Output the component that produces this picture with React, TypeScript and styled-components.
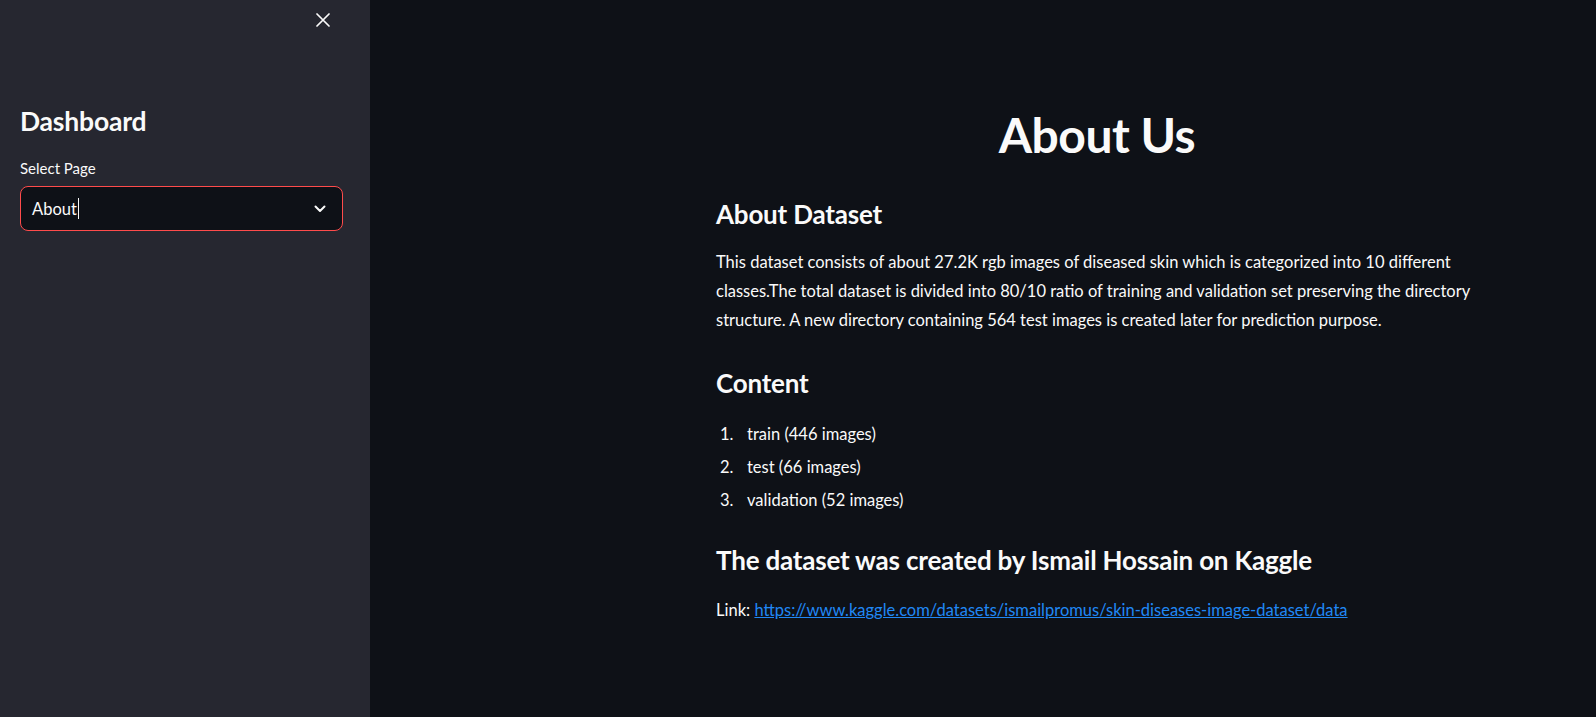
import React from "react";
import styled, { createGlobalStyle } from "styled-components";

const Global = createGlobalStyle`
  html, body { margin: 0; padding: 0; background: #0e1117; }
  body { font-family: Lato, "Liberation Sans", sans-serif; color: #fafafa; }
  * { box-sizing: border-box; }
`;

const Shell = styled.div`
  display: flex;
  width: 100%;
  height: 717px;
  overflow: hidden;
`;

const Sidebar = styled.aside`
  width: 370px;
  flex: none;
  background: #262730;
  display: flex;
  flex-direction: column;
  padding: 0 27px 0 20px;
`;

const SideTop = styled.div`
  height: 40px;
  display: flex;
  justify-content: flex-end;
  align-items: center;
`;

const CloseBtn = styled.button`
  width: 24px;
  height: 24px;
  border: none;
  background: transparent;
  padding: 0;
  display: flex;
  align-items: center;
  justify-content: center;
  color: #fafafa;
  margin-right: 8px;
`;

const SideTitle = styled.h2`
  margin: 62px 0 0 0;
  font-size: 26.5px;
  font-weight: 700;
  line-height: 38px;
  letter-spacing: -0.2px;
`;

const Label = styled.label`
  margin-top: 18px;
  font-size: 15px;
  line-height: 20px;
  display: block;
`;

const SelectBox = styled.div`
  margin-top: 8px;
  height: 45px;
  border: 1px solid #ff4b4b;
  border-radius: 8px;
  background: #0e1117;
  display: flex;
  align-items: center;
  padding: 0 16px 0 11px;
`;

const SelectValue = styled.span`
  flex: 1;
  font-size: 16.5px;
  display: flex;
  align-items: center;
`;

const Caret = styled.span`
  display: inline-block;
  width: 1px;
  height: 21px;
  background: #fafafa;
  margin-left: 1px;
`;

const Main = styled.main`
  flex: 1;
  padding: 102px 0 0 346px;
`;

const Content = styled.div`
  width: 776px;
`;

const Title = styled.h1`
  margin: 0;
  text-align: center;
  font-size: 48px;
  font-weight: 700;
  line-height: 66px;
  padding-right: 14px;
  letter-spacing: -0.5px;
`;

const Heading = styled.h3<{ $top: number }>`
  margin: ${(p) => p.$top}px 0 0 0;
  font-size: 26px;
  font-weight: 700;
  line-height: 36px;
  letter-spacing: -0.2px;
`;

const Para = styled.p<{ $top: number }>`
  margin: ${(p) => p.$top}px 0 0 0;
  font-size: 16.5px;
  line-height: 29px;
`;

const List = styled.ol`
  margin: 19px 0 0 0;
  padding: 0;
  list-style: none;
  display: flex;
  flex-direction: column;
  gap: 4px;
`;

const Item = styled.li`
  display: flex;
  font-size: 16.5px;
  line-height: 29px;
`;

const Num = styled.span`
  width: 31px;
  padding-left: 4px;
  flex: none;
`;

const Link = styled.a`
  color: #2088f5;
  text-decoration: underline;
`;

const items = ["train (446 images)", "test (66 images)", "validation (52 images)"];

export default function App() {
  return (
    <>
      <Global />
      <Shell>
        <Sidebar>
          <SideTop>
            <CloseBtn aria-label="close">
              <svg width="14" height="14" viewBox="0 0 14 14">
                <path d="M1 1 L13 13 M13 1 L1 13" stroke="#fafafa" strokeWidth="1.7" strokeLinecap="round" />
              </svg>
            </CloseBtn>
          </SideTop>
          <SideTitle>Dashboard</SideTitle>
          <Label>Select Page</Label>
          <SelectBox>
            <SelectValue>
              About<Caret />
            </SelectValue>
            <svg width="12" height="8" viewBox="0 0 12 8">
              <path d="M1.5 1.5 L6 6 L10.5 1.5" stroke="#fafafa" strokeWidth="2" fill="none" strokeLinecap="round" strokeLinejoin="round" />
            </svg>
          </SelectBox>
        </Sidebar>
        <Main>
          <Content>
            <Title>About Us</Title>
            <Heading $top={28}>About Dataset</Heading>
            <Para $top={16}>
              This dataset consists of about 27.2K rgb images of diseased skin which is categorized into 10 different
              classes.The total dataset is divided into 80/10 ratio of training and validation set preserving the directory
              structure. A new directory containing 564 test images is created later for prediction purpose.
            </Para>
            <Heading $top={30}>Content</Heading>
            <List>
              {items.map((t, i) => (
                <Item key={t}>
                  <Num>{i + 1}.</Num>
                  {t}
                </Item>
              ))}
            </List>
            <Heading $top={27}>The dataset was created by Ismail Hossain on Kaggle</Heading>
            <Para $top={18}>
              Link:{" "}
              <Link href="#">https://www.kaggle.com/datasets/ismailpromus/skin-diseases-image-dataset/data</Link>
            </Para>
          </Content>
        </Main>
      </Shell>
    </>
  );
}
